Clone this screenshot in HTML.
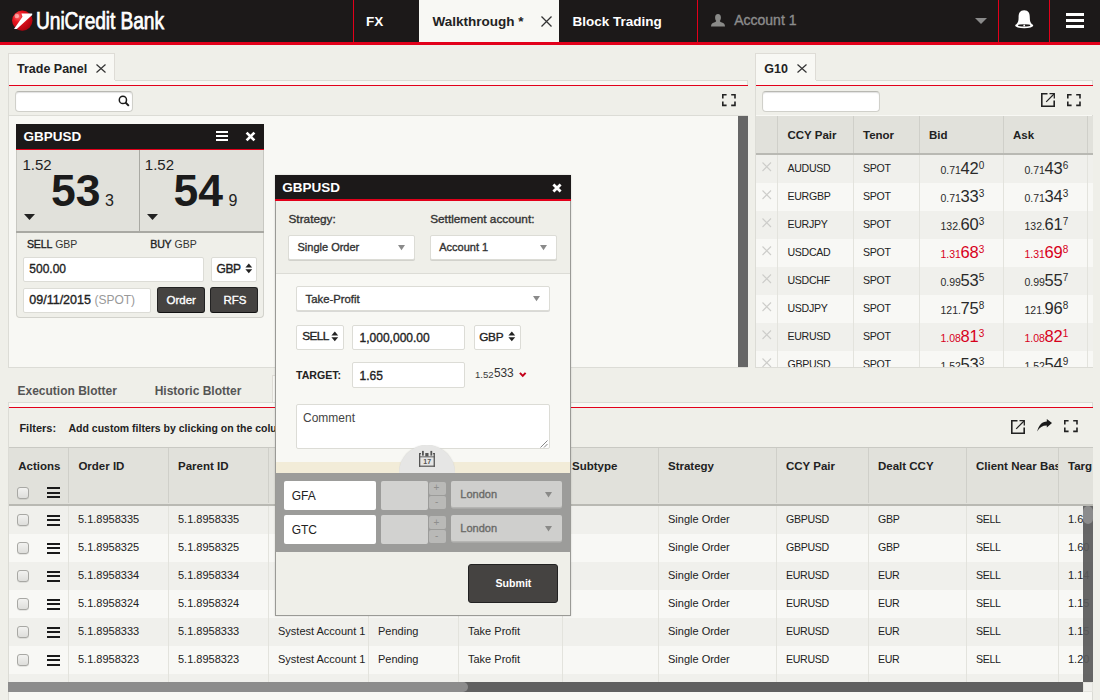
<!DOCTYPE html>
<html><head><meta charset="utf-8">
<style>
*{box-sizing:border-box;margin:0;padding:0}
html,body{width:1100px;height:700px;overflow:hidden}
body{position:relative;background:#efefe9;font-family:"Liberation Sans",sans-serif;color:#222;}
.a{position:absolute}
.t{position:absolute;line-height:1;white-space:nowrap}
svg{display:block;overflow:visible}
.m{-webkit-text-stroke:0.35px currentColor}
.clip{position:absolute;overflow:hidden}
</style></head>
<body>
<div class="a" style="left:0px;top:0px;width:1100px;height:42px;background:#1c1919"></div>
<div class="a" style="left:0px;top:42px;width:1100px;height:3px;background:#e2001a"></div>
<div class="a" style="left:353px;top:0px;width:1px;height:42px;background:#e2001a"></div>
<div class="a" style="left:697px;top:0px;width:1px;height:42px;background:#e2001a"></div>
<div class="a" style="left:998px;top:0px;width:1px;height:42px;background:#e2001a"></div>
<div class="a" style="left:1049px;top:0px;width:1px;height:42px;background:#e2001a"></div>
<div class="a" style="left:419px;top:0px;width:140px;height:42px;background:#f8f8f4"></div>
<svg class="a" style="left:11px;top:10px;" width="23" height="22" viewBox="0 0 23 22"><defs><radialGradient id="lg" cx="0.3" cy="0.3" r="0.8"><stop offset="0" stop-color="#ff6a6a"/><stop offset="0.35" stop-color="#e8141e"/><stop offset="1" stop-color="#a8000c"/></radialGradient></defs>
<circle cx="11.3" cy="10.6" r="10.2" fill="url(#lg)"/>
<circle cx="5.8" cy="6" r="2.2" fill="#fff" opacity="0.45"/><polygon points="3,19 11.5,6.7 10.4,3.5 21.2,3.5 21.2,4.9 5.8,19" fill="#fff"/></svg>
<div class="t" style="left:35.6px;top:9.80px;font-size:23px;font-weight:normal;color:#fff;transform:scaleX(0.835);transform-origin:0 0;letter-spacing:-0.1px;-webkit-text-stroke:0.75px #fff">UniCredit Bank</div>
<div class="t" style="left:366px;top:14.91px;font-size:13.5px;font-weight:bold;color:#fff;">FX</div>
<div class="t" style="left:432.5px;top:14.91px;font-size:13.5px;font-weight:bold;color:#222;">Walkthrough *</div>
<svg class="a" style="left:541px;top:15.5px;" width="11" height="11" viewBox="0 0 11 11"><path d="M0.5 0.5L10.5 10.5M10.5 0.5L0.5 10.5" stroke="#333" stroke-width="1.3"/></svg>
<div class="t" style="left:572.5px;top:14.91px;font-size:13.5px;font-weight:bold;color:#fff;">Block Trading</div>
<svg class="a" style="left:710.5px;top:13.7px;" width="14" height="12.5" viewBox="0 0 14 12.5"><ellipse cx="7" cy="3.7" rx="2.9" ry="3.7" fill="#8a8a88"/><path d="M0 12.4 C0 9.6 1.4 8.7 4.4 7.9 L5.6 6.6 H8.4 L9.6 7.9 C12.6 8.7 14 9.6 14 12.4Z" fill="#8a8a88"/></svg>
<div class="t" style="left:734.2px;top:13.36px;font-size:14px;font-weight:normal;color:#8c8c8c;"><span class=m>Account 1</span></div>
<svg class="a" style="left:975px;top:17.5px;" width="12" height="6" viewBox="0 0 12 6"><polygon points="0,0 12,0 6,6" fill="#8a8a8a"/></svg>
<svg class="a" style="left:1015px;top:10.3px;" width="18.4" height="18.5" viewBox="0 0 18.4 18.5"><path d="M9.2 0.3 C4.9 0.3 3.6 3.4 3.6 7.4 C3.6 11 2.9 12.8 1.1 14.4 L17.3 14.4 C15.5 12.8 14.8 11 14.8 7.4 C14.8 3.4 13.5 0.3 9.2 0.3Z" fill="#fff"/><ellipse cx="9.2" cy="15.6" rx="9.1" ry="2.6" fill="#fff"/><ellipse cx="9.2" cy="15.4" rx="6.2" ry="1.1" fill="#1c1919"/><circle cx="9.2" cy="15.5" r="0.9" fill="#fff"/></svg>
<div class="a" style="left:1066px;top:13px;width:18px;height:3px;background:#fff"></div>
<div class="a" style="left:1066px;top:19px;width:18px;height:3px;background:#fff"></div>
<div class="a" style="left:1066px;top:25px;width:18px;height:3px;background:#fff"></div>
<div class="a" style="left:8px;top:53px;width:107px;height:28px;background:#f8f8f4;border:1px solid #dedcd6;border-bottom:none"></div>
<div class="t" style="left:17px;top:62.53px;font-size:12.5px;font-weight:bold;color:#222;">Trade Panel</div>
<svg class="a" style="left:96px;top:64px;" width="10" height="9" viewBox="0 0 10 9"><path d="M0.5 0.5L9.5 8.5M9.5 0.5L0.5 8.5" stroke="#333" stroke-width="1.2"/></svg>
<div class="a" style="left:8px;top:80px;width:740px;height:288px;background:#f8f8f4;border:1px solid #dcdcd6;border-top:none"></div>
<div class="a" style="left:115px;top:80px;width:633px;height:1px;background:#dcdcd6"></div>
<div class="a" style="left:9px;top:85px;width:739px;height:1px;background:#e2001a"></div>
<div class="a" style="left:9px;top:86px;width:739px;height:29px;background:#efefe9"></div>
<div class="a" style="left:9px;top:115px;width:739px;height:1px;background:#dcdcd6"></div>
<div class="a" style="left:15px;top:91px;width:118px;height:20.5px;background:#fff;border:1px solid #d0d0ca;border-top-color:#b8b8b2;border-radius:4px;box-shadow:inset 0 1px 1px rgba(0,0,0,.12)"></div>
<svg class="a" style="left:118px;top:95px;" width="12" height="12" viewBox="0 0 12 12"><circle cx="4.9" cy="4.9" r="3.6" fill="none" stroke="#1a1a1a" stroke-width="1.5"/><path d="M7.5 7.5L10.8 10.8" stroke="#1a1a1a" stroke-width="1.9"/></svg>
<svg class="a" style="left:722.2px;top:93.5px;" width="13.8" height="12.2" viewBox="0 0 13.8 12.2"><path d="M0.8 4.6V0.8H4.6M9.200000000000001 0.8H13.0V4.6M13.0 7.6V11.399999999999999H9.200000000000001M4.6 11.399999999999999H0.8V7.6" fill="none" stroke="#222" stroke-width="1.6"/></svg>
<div class="a" style="left:738px;top:116px;width:10px;height:251px;background:#666"></div>
<div class="a" style="left:755px;top:53px;width:61px;height:28px;background:#f8f8f4;border:1px solid #dedcd6;border-bottom:none"></div>
<div class="t" style="left:764.3px;top:62.53px;font-size:12.5px;font-weight:bold;color:#222;">G10</div>
<svg class="a" style="left:796.5px;top:64px;" width="10" height="9" viewBox="0 0 10 9"><path d="M0.5 0.5L9.5 8.5M9.5 0.5L0.5 8.5" stroke="#333" stroke-width="1.2"/></svg>
<div class="a" style="left:755px;top:80px;width:338px;height:288px;background:#f8f8f4;border:1px solid #dcdcd6;border-top:none"></div>
<div class="a" style="left:816px;top:80px;width:277px;height:1px;background:#dcdcd6"></div>
<div class="a" style="left:756px;top:85px;width:337px;height:1px;background:#e2001a"></div>
<div class="a" style="left:756px;top:86px;width:337px;height:29px;background:#efefe9"></div>
<div class="a" style="left:762px;top:91px;width:118px;height:20.5px;background:#fff;border:1px solid #d0d0ca;border-top-color:#b8b8b2;border-radius:4px;box-shadow:inset 0 1px 1px rgba(0,0,0,.12)"></div>
<svg class="a" style="left:1041px;top:93px;" width="14" height="14" viewBox="0 0 14 14"><path d="M6.5 0.8H0.8V13.2H13.2V7.5" fill="none" stroke="#222" stroke-width="1.6"/><path d="M8.5 0.7H13.3V5.5" fill="none" stroke="#222" stroke-width="1.3"/><path d="M13 1L5.2 8.8" stroke="#222" stroke-width="1.2"/></svg>
<svg class="a" style="left:1067.3px;top:93.5px;" width="13.8" height="12.2" viewBox="0 0 13.8 12.2"><path d="M0.8 4.6V0.8H4.6M9.200000000000001 0.8H13.0V4.6M13.0 7.6V11.399999999999999H9.200000000000001M4.6 11.399999999999999H0.8V7.6" fill="none" stroke="#222" stroke-width="1.6"/></svg>
<div class="clip" style="left:756px;top:116px;width:337px;height:251px">
</div>
<div class="a" style="left:756px;top:116px;width:337px;height:37px;background:#e1e1db"></div>
<div class="a" style="left:756px;top:153px;width:337px;height:2px;background:#b9b9b3"></div>
<div class="clip" style="left:0;top:0;width:1093px;height:367px">
<div class="a" style="left:756px;top:155px;width:337px;height:28px;background:#f0f0ec"></div>
<div class="a" style="left:756px;top:183px;width:337px;height:28px;background:#f8f8f5"></div>
<div class="a" style="left:756px;top:211px;width:337px;height:28px;background:#f0f0ec"></div>
<div class="a" style="left:756px;top:239px;width:337px;height:28px;background:#f8f8f5"></div>
<div class="a" style="left:756px;top:267px;width:337px;height:28px;background:#f0f0ec"></div>
<div class="a" style="left:756px;top:295px;width:337px;height:28px;background:#f8f8f5"></div>
<div class="a" style="left:756px;top:323px;width:337px;height:28px;background:#f0f0ec"></div>
<div class="a" style="left:756px;top:351px;width:337px;height:28px;background:#f8f8f5"></div>
<div class="a" style="left:777px;top:116px;width:1px;height:37px;background:#cfcfc9"></div>
<div class="a" style="left:777px;top:155px;width:1px;height:212px;background:#e3e3dd"></div>
<div class="a" style="left:853px;top:116px;width:1px;height:37px;background:#cfcfc9"></div>
<div class="a" style="left:853px;top:155px;width:1px;height:212px;background:#e3e3dd"></div>
<div class="a" style="left:919px;top:116px;width:1px;height:37px;background:#cfcfc9"></div>
<div class="a" style="left:919px;top:155px;width:1px;height:212px;background:#e3e3dd"></div>
<div class="a" style="left:1003px;top:116px;width:1px;height:37px;background:#cfcfc9"></div>
<div class="a" style="left:1003px;top:155px;width:1px;height:212px;background:#e3e3dd"></div>
<div class="a" style="left:1087px;top:116px;width:1px;height:37px;background:#cfcfc9"></div>
<div class="a" style="left:1087px;top:155px;width:1px;height:212px;background:#e3e3dd"></div>
<svg class="a" style="left:762px;top:161.6px;" width="9.5" height="9.5" viewBox="0 0 9.5 9.5"><path d="M0.5 0.5L9.0 9.0M9.0 0.5L0.5 9.0" stroke="#cdcdca" stroke-width="1.1"/></svg>
<div class="t" style="left:787.5px;top:162.75px;font-size:10.6px;font-weight:normal;color:#222;letter-spacing:-0.3px">AUDUSD</div>
<div class="t" style="left:863px;top:162.75px;font-size:10.6px;font-weight:normal;color:#222;letter-spacing:-0.3px">SPOT</div>
<div class="t" style="left:940.5px;top:165.11px;font-size:10.5px;font-weight:normal;color:#2a2a2a;">0.71</div>
<div class="t" style="left:960.43px;top:160.03px;font-size:16.5px;font-weight:normal;color:#2a2a2a;">42</div>
<div class="t" style="left:978.78px;top:160.82px;font-size:10px;font-weight:normal;color:#2a2a2a;">0</div>
<div class="t" style="left:1024.5px;top:165.11px;font-size:10.5px;font-weight:normal;color:#2a2a2a;">0.71</div>
<div class="t" style="left:1044.43px;top:160.03px;font-size:16.5px;font-weight:normal;color:#2a2a2a;">43</div>
<div class="t" style="left:1062.78px;top:160.82px;font-size:10px;font-weight:normal;color:#2a2a2a;">6</div>
<svg class="a" style="left:762px;top:189.6px;" width="9.5" height="9.5" viewBox="0 0 9.5 9.5"><path d="M0.5 0.5L9.0 9.0M9.0 0.5L0.5 9.0" stroke="#cdcdca" stroke-width="1.1"/></svg>
<div class="t" style="left:787.5px;top:190.75px;font-size:10.6px;font-weight:normal;color:#222;letter-spacing:-0.3px">EURGBP</div>
<div class="t" style="left:863px;top:190.75px;font-size:10.6px;font-weight:normal;color:#222;letter-spacing:-0.3px">SPOT</div>
<div class="t" style="left:940.5px;top:193.11px;font-size:10.5px;font-weight:normal;color:#2a2a2a;">0.71</div>
<div class="t" style="left:960.43px;top:188.03px;font-size:16.5px;font-weight:normal;color:#2a2a2a;">33</div>
<div class="t" style="left:978.78px;top:188.82px;font-size:10px;font-weight:normal;color:#2a2a2a;">3</div>
<div class="t" style="left:1024.5px;top:193.11px;font-size:10.5px;font-weight:normal;color:#2a2a2a;">0.71</div>
<div class="t" style="left:1044.43px;top:188.03px;font-size:16.5px;font-weight:normal;color:#2a2a2a;">34</div>
<div class="t" style="left:1062.78px;top:188.82px;font-size:10px;font-weight:normal;color:#2a2a2a;">3</div>
<svg class="a" style="left:762px;top:217.6px;" width="9.5" height="9.5" viewBox="0 0 9.5 9.5"><path d="M0.5 0.5L9.0 9.0M9.0 0.5L0.5 9.0" stroke="#cdcdca" stroke-width="1.1"/></svg>
<div class="t" style="left:787.5px;top:218.75px;font-size:10.6px;font-weight:normal;color:#222;letter-spacing:-0.3px">EURJPY</div>
<div class="t" style="left:863px;top:218.75px;font-size:10.6px;font-weight:normal;color:#222;letter-spacing:-0.3px">SPOT</div>
<div class="t" style="left:940.5px;top:221.11px;font-size:10.5px;font-weight:normal;color:#2a2a2a;">132.</div>
<div class="t" style="left:960.43px;top:216.03px;font-size:16.5px;font-weight:normal;color:#2a2a2a;">60</div>
<div class="t" style="left:978.78px;top:216.82px;font-size:10px;font-weight:normal;color:#2a2a2a;">3</div>
<div class="t" style="left:1024.5px;top:221.11px;font-size:10.5px;font-weight:normal;color:#2a2a2a;">132.</div>
<div class="t" style="left:1044.43px;top:216.03px;font-size:16.5px;font-weight:normal;color:#2a2a2a;">61</div>
<div class="t" style="left:1062.78px;top:216.82px;font-size:10px;font-weight:normal;color:#2a2a2a;">7</div>
<svg class="a" style="left:762px;top:245.6px;" width="9.5" height="9.5" viewBox="0 0 9.5 9.5"><path d="M0.5 0.5L9.0 9.0M9.0 0.5L0.5 9.0" stroke="#cdcdca" stroke-width="1.1"/></svg>
<div class="t" style="left:787.5px;top:246.75px;font-size:10.6px;font-weight:normal;color:#222;letter-spacing:-0.3px">USDCAD</div>
<div class="t" style="left:863px;top:246.75px;font-size:10.6px;font-weight:normal;color:#222;letter-spacing:-0.3px">SPOT</div>
<div class="t" style="left:940.5px;top:249.11px;font-size:10.5px;font-weight:normal;color:#d7001b;">1.31</div>
<div class="t" style="left:960.43px;top:244.03px;font-size:16.5px;font-weight:normal;color:#d7001b;">68</div>
<div class="t" style="left:978.78px;top:244.82px;font-size:10px;font-weight:normal;color:#d7001b;">3</div>
<div class="t" style="left:1024.5px;top:249.11px;font-size:10.5px;font-weight:normal;color:#d7001b;">1.31</div>
<div class="t" style="left:1044.43px;top:244.03px;font-size:16.5px;font-weight:normal;color:#d7001b;">69</div>
<div class="t" style="left:1062.78px;top:244.82px;font-size:10px;font-weight:normal;color:#d7001b;">8</div>
<svg class="a" style="left:762px;top:273.6px;" width="9.5" height="9.5" viewBox="0 0 9.5 9.5"><path d="M0.5 0.5L9.0 9.0M9.0 0.5L0.5 9.0" stroke="#cdcdca" stroke-width="1.1"/></svg>
<div class="t" style="left:787.5px;top:274.75px;font-size:10.6px;font-weight:normal;color:#222;letter-spacing:-0.3px">USDCHF</div>
<div class="t" style="left:863px;top:274.75px;font-size:10.6px;font-weight:normal;color:#222;letter-spacing:-0.3px">SPOT</div>
<div class="t" style="left:940.5px;top:277.11px;font-size:10.5px;font-weight:normal;color:#2a2a2a;">0.99</div>
<div class="t" style="left:960.43px;top:272.03px;font-size:16.5px;font-weight:normal;color:#2a2a2a;">53</div>
<div class="t" style="left:978.78px;top:272.82px;font-size:10px;font-weight:normal;color:#2a2a2a;">5</div>
<div class="t" style="left:1024.5px;top:277.11px;font-size:10.5px;font-weight:normal;color:#2a2a2a;">0.99</div>
<div class="t" style="left:1044.43px;top:272.03px;font-size:16.5px;font-weight:normal;color:#2a2a2a;">55</div>
<div class="t" style="left:1062.78px;top:272.82px;font-size:10px;font-weight:normal;color:#2a2a2a;">7</div>
<svg class="a" style="left:762px;top:301.6px;" width="9.5" height="9.5" viewBox="0 0 9.5 9.5"><path d="M0.5 0.5L9.0 9.0M9.0 0.5L0.5 9.0" stroke="#cdcdca" stroke-width="1.1"/></svg>
<div class="t" style="left:787.5px;top:302.75px;font-size:10.6px;font-weight:normal;color:#222;letter-spacing:-0.3px">USDJPY</div>
<div class="t" style="left:863px;top:302.75px;font-size:10.6px;font-weight:normal;color:#222;letter-spacing:-0.3px">SPOT</div>
<div class="t" style="left:940.5px;top:305.11px;font-size:10.5px;font-weight:normal;color:#2a2a2a;">121.</div>
<div class="t" style="left:960.43px;top:300.03px;font-size:16.5px;font-weight:normal;color:#2a2a2a;">75</div>
<div class="t" style="left:978.78px;top:300.82px;font-size:10px;font-weight:normal;color:#2a2a2a;">8</div>
<div class="t" style="left:1024.5px;top:305.11px;font-size:10.5px;font-weight:normal;color:#2a2a2a;">121.</div>
<div class="t" style="left:1044.43px;top:300.03px;font-size:16.5px;font-weight:normal;color:#2a2a2a;">96</div>
<div class="t" style="left:1062.78px;top:300.82px;font-size:10px;font-weight:normal;color:#2a2a2a;">8</div>
<svg class="a" style="left:762px;top:329.6px;" width="9.5" height="9.5" viewBox="0 0 9.5 9.5"><path d="M0.5 0.5L9.0 9.0M9.0 0.5L0.5 9.0" stroke="#cdcdca" stroke-width="1.1"/></svg>
<div class="t" style="left:787.5px;top:330.75px;font-size:10.6px;font-weight:normal;color:#222;letter-spacing:-0.3px">EURUSD</div>
<div class="t" style="left:863px;top:330.75px;font-size:10.6px;font-weight:normal;color:#222;letter-spacing:-0.3px">SPOT</div>
<div class="t" style="left:940.5px;top:333.11px;font-size:10.5px;font-weight:normal;color:#d7001b;">1.08</div>
<div class="t" style="left:960.43px;top:328.03px;font-size:16.5px;font-weight:normal;color:#d7001b;">81</div>
<div class="t" style="left:978.78px;top:328.82px;font-size:10px;font-weight:normal;color:#d7001b;">3</div>
<div class="t" style="left:1024.5px;top:333.11px;font-size:10.5px;font-weight:normal;color:#d7001b;">1.08</div>
<div class="t" style="left:1044.43px;top:328.03px;font-size:16.5px;font-weight:normal;color:#d7001b;">82</div>
<div class="t" style="left:1062.78px;top:328.82px;font-size:10px;font-weight:normal;color:#d7001b;">1</div>
<svg class="a" style="left:762px;top:357.6px;" width="9.5" height="9.5" viewBox="0 0 9.5 9.5"><path d="M0.5 0.5L9.0 9.0M9.0 0.5L0.5 9.0" stroke="#cdcdca" stroke-width="1.1"/></svg>
<div class="t" style="left:787.5px;top:358.75px;font-size:10.6px;font-weight:normal;color:#222;letter-spacing:-0.3px">GBPUSD</div>
<div class="t" style="left:863px;top:358.75px;font-size:10.6px;font-weight:normal;color:#222;letter-spacing:-0.3px">SPOT</div>
<div class="t" style="left:940.5px;top:361.11px;font-size:10.5px;font-weight:normal;color:#2a2a2a;">1.52</div>
<div class="t" style="left:960.43px;top:356.03px;font-size:16.5px;font-weight:normal;color:#2a2a2a;">53</div>
<div class="t" style="left:978.78px;top:356.82px;font-size:10px;font-weight:normal;color:#2a2a2a;">3</div>
<div class="t" style="left:1024.5px;top:361.11px;font-size:10.5px;font-weight:normal;color:#2a2a2a;">1.52</div>
<div class="t" style="left:1044.43px;top:356.03px;font-size:16.5px;font-weight:normal;color:#2a2a2a;">54</div>
<div class="t" style="left:1062.78px;top:356.82px;font-size:10px;font-weight:normal;color:#2a2a2a;">9</div>
</div>
<div class="t" style="left:787.5px;top:130.05px;font-size:11.5px;font-weight:bold;color:#222;">CCY Pair</div>
<div class="t" style="left:863px;top:130.05px;font-size:11.5px;font-weight:bold;color:#222;">Tenor</div>
<div class="t" style="left:929px;top:130.05px;font-size:11.5px;font-weight:bold;color:#222;">Bid</div>
<div class="t" style="left:1013px;top:130.05px;font-size:11.5px;font-weight:bold;color:#222;">Ask</div>
<div class="a" style="left:16px;top:124px;width:248px;height:26px;background:#1c1919"></div>
<div class="a" style="left:16px;top:149px;width:248px;height:1px;background:#e2001a"></div>
<div class="t" style="left:23.4px;top:130.21px;font-size:13.5px;font-weight:bold;color:#fff;">GBPUSD</div>
<div class="a" style="left:215.5px;top:130.8px;width:12.5px;height:2.2px;background:#fff"></div>
<div class="a" style="left:215.5px;top:134.9px;width:12.5px;height:2.2px;background:#fff"></div>
<div class="a" style="left:215.5px;top:139px;width:12.5px;height:2.2px;background:#fff"></div>
<svg class="a" style="left:244.5px;top:130.5px;" width="11" height="11" viewBox="0 0 11 11"><path d="M1.6 1.6L9.4 9.4M9.4 1.6L1.6 9.4" stroke="#fff" stroke-width="2.7"/></svg>
<div class="a" style="left:16px;top:150px;width:248px;height:83px;background:#e1e1db;border-left:1px solid #c8c8c2;border-right:1px solid #c8c8c2"></div>
<div class="a" style="left:139px;top:150px;width:1px;height:81px;background:#a9a9a3"></div>
<div class="a" style="left:16px;top:231px;width:248px;height:2px;background:#a9a9a3"></div>
<div class="t" style="left:22.4px;top:156.54px;font-size:15px;font-weight:normal;color:#222;">1.52</div>
<div class="t" style="left:144.8px;top:156.54px;font-size:15px;font-weight:normal;color:#222;">1.52</div>
<div class="t" style="left:51px;top:168.77px;font-size:44.5px;font-weight:bold;color:#1b1b1b;">53</div>
<div class="t" style="left:105px;top:193.12px;font-size:16px;font-weight:normal;color:#222;">3</div>
<div class="t" style="left:173.5px;top:168.77px;font-size:44.5px;font-weight:bold;color:#1b1b1b;">54</div>
<div class="t" style="left:228.5px;top:193.12px;font-size:16px;font-weight:normal;color:#222;">9</div>
<svg class="a" style="left:24px;top:214px;" width="11" height="6" viewBox="0 0 11 6"><polygon points="0,0 11,0 5.5,6" fill="#222"/></svg>
<svg class="a" style="left:146.5px;top:213.5px;" width="11" height="6" viewBox="0 0 11 6"><polygon points="0,0 11,0 5.5,6" fill="#222"/></svg>
<div class="a" style="left:16px;top:233px;width:248px;height:85px;background:#efefe9;border:1px solid #d2d2cc;border-top:none;border-radius:0 0 4px 4px"></div>
<div class="t" style="left:27px;top:238.71px;font-size:11px;font-weight:normal;color:#222;"><span class=m style="letter-spacing:-0.2px;font-size:10.6px">SELL</span> <span style="font-size:10.5px;color:#333">GBP</span></div>
<div class="t" style="left:150.3px;top:238.71px;font-size:11px;font-weight:normal;color:#222;"><span class=m style="letter-spacing:-0.2px;font-size:10.6px">BUY</span> <span style="font-size:10.5px;color:#333">GBP</span></div>
<div class="a" style="left:22.5px;top:256.5px;width:181.5px;height:25px;background:#fff;border:1px solid #dcdcd6;border-radius:2px;"></div>
<div class="t" style="left:29.3px;top:262.59px;font-size:12px;font-weight:normal;color:#222;"><span class=m>500.00</span></div>
<div class="a" style="left:210.5px;top:256.5px;width:46.5px;height:25px;background:#fff;border:1px solid #dcdcd6;border-radius:2px;"></div>
<div class="t" style="left:216.5px;top:262.59px;font-size:12px;font-weight:normal;color:#222;"><span class=m style="letter-spacing:-0.4px">GBP</span></div>
<svg class="a" style="left:244.8px;top:263.2px;" width="8" height="11" viewBox="0 0 8 11"><polygon points="0.4,4.5 3.8,0.4 7.2,4.5" fill="#222"/><polygon points="0.4,6.2 7.2,6.2 3.8,10.2" fill="#222"/></svg>
<div class="a" style="left:22.5px;top:287.5px;width:128.5px;height:25px;background:#fff;border:1px solid #dcdcd6;border-radius:2px;"></div>
<div class="t" style="left:29.3px;top:294.03px;font-size:12.5px;font-weight:normal;color:#222;"><span class=m>09/11/2015</span> <span style="color:#999;font-size:12px">(SPOT)</span></div>
<div class="a" style="left:157px;top:287px;width:48px;height:26px;background:#454341;border:1px solid #222;border-bottom-color:#111;border-radius:3px"></div>
<div class="a" style="left:210px;top:287px;width:48px;height:26px;background:#454341;border:1px solid #222;border-bottom-color:#111;border-radius:3px"></div>
<div class="t" style="left:166.5px;top:294.85px;font-size:11.5px;font-weight:normal;color:#fff;"><span class=m>Order</span></div>
<div class="t" style="left:223.5px;top:294.85px;font-size:11.5px;font-weight:normal;color:#fff;"><span class=m>RFS</span></div>
<div class="t" style="left:17.5px;top:384.59px;font-size:12px;font-weight:bold;color:#555;">Execution Blotter</div>
<div class="t" style="left:154.7px;top:384.59px;font-size:12px;font-weight:bold;color:#555;">Historic Blotter</div>
<div class="a" style="left:272px;top:375px;width:100px;height:28px;background:#f8f8f4;border:1px solid #dedcd6;border-bottom:none"></div>
<div class="a" style="left:8px;top:402px;width:1085px;height:300px;background:#f8f8f4;border:1px solid #dcdcd6"></div>
<div class="a" style="left:9px;top:407px;width:1084px;height:1px;background:#e2001a"></div>
<div class="a" style="left:9px;top:408px;width:1084px;height:39px;background:#efefe9"></div>
<div class="a" style="left:9px;top:447px;width:1084px;height:1px;background:#c9c9c3"></div>
<div class="t" style="left:19.4px;top:422.71px;font-size:11px;font-weight:bold;color:#222;">Filters:</div>
<div class="t" style="left:68.5px;top:422.77px;font-size:10.5px;font-weight:bold;color:#222;">Add custom filters by clicking on the column headers</div>
<svg class="a" style="left:1011px;top:419.5px;" width="14" height="14" viewBox="0 0 14 14"><path d="M6.5 0.8H0.8V13.2H13.2V7.5" fill="none" stroke="#222" stroke-width="1.6"/><path d="M8.5 0.7H13.3V5.5" fill="none" stroke="#222" stroke-width="1.3"/><path d="M13 1L5.2 8.8" stroke="#222" stroke-width="1.2"/></svg>
<svg class="a" style="left:1037px;top:419.4px;" width="15" height="13" viewBox="0 0 15 13"><path d="M0.2 12.6 C1.5 6.5 5 2.5 9.8 2.5 V0 L15 4.1 L9.8 8.6 V6.6 C5.5 6.6 2.5 8.5 0.2 12.6Z" fill="#1a1a1a"/></svg>
<svg class="a" style="left:1064.2px;top:419.8px;" width="13.8" height="12.2" viewBox="0 0 13.8 12.2"><path d="M0.8 4.6V0.8H4.6M9.200000000000001 0.8H13.0V4.6M13.0 7.6V11.399999999999999H9.200000000000001M4.6 11.399999999999999H0.8V7.6" fill="none" stroke="#222" stroke-width="1.6"/></svg>
<div class="a" style="left:9px;top:448px;width:1084px;height:56px;background:#e1e1db"></div>
<div class="a" style="left:9px;top:504px;width:1084px;height:2px;background:#b9b9b3"></div>
<div class="clip" style="left:0;top:0;width:1093px;height:682px">
<div class="a" style="left:9px;top:506px;width:1084px;height:28px;background:#f0f0ec"></div>
<div class="a" style="left:9px;top:534px;width:1084px;height:28px;background:#f8f8f5"></div>
<div class="a" style="left:9px;top:562px;width:1084px;height:28px;background:#f0f0ec"></div>
<div class="a" style="left:9px;top:590px;width:1084px;height:28px;background:#f8f8f5"></div>
<div class="a" style="left:9px;top:618px;width:1084px;height:28px;background:#f0f0ec"></div>
<div class="a" style="left:9px;top:646px;width:1084px;height:28px;background:#f8f8f5"></div>
<div class="a" style="left:9px;top:674px;width:1084px;height:28px;background:#f0f0ec"></div>
<div class="a" style="left:68px;top:448px;width:1px;height:55px;background:#cfcfc9"></div>
<div class="a" style="left:68px;top:506px;width:1px;height:180px;background:#e3e3dd"></div>
<div class="a" style="left:168px;top:448px;width:1px;height:55px;background:#cfcfc9"></div>
<div class="a" style="left:168px;top:506px;width:1px;height:180px;background:#e3e3dd"></div>
<div class="a" style="left:268px;top:448px;width:1px;height:55px;background:#cfcfc9"></div>
<div class="a" style="left:268px;top:506px;width:1px;height:180px;background:#e3e3dd"></div>
<div class="a" style="left:368px;top:448px;width:1px;height:55px;background:#cfcfc9"></div>
<div class="a" style="left:368px;top:506px;width:1px;height:180px;background:#e3e3dd"></div>
<div class="a" style="left:458px;top:448px;width:1px;height:55px;background:#cfcfc9"></div>
<div class="a" style="left:458px;top:506px;width:1px;height:180px;background:#e3e3dd"></div>
<div class="a" style="left:562px;top:448px;width:1px;height:55px;background:#cfcfc9"></div>
<div class="a" style="left:562px;top:506px;width:1px;height:180px;background:#e3e3dd"></div>
<div class="a" style="left:658px;top:448px;width:1px;height:55px;background:#cfcfc9"></div>
<div class="a" style="left:658px;top:506px;width:1px;height:180px;background:#e3e3dd"></div>
<div class="a" style="left:776px;top:448px;width:1px;height:55px;background:#cfcfc9"></div>
<div class="a" style="left:776px;top:506px;width:1px;height:180px;background:#e3e3dd"></div>
<div class="a" style="left:868px;top:448px;width:1px;height:55px;background:#cfcfc9"></div>
<div class="a" style="left:868px;top:506px;width:1px;height:180px;background:#e3e3dd"></div>
<div class="a" style="left:966px;top:448px;width:1px;height:55px;background:#cfcfc9"></div>
<div class="a" style="left:966px;top:506px;width:1px;height:180px;background:#e3e3dd"></div>
<div class="a" style="left:1058px;top:448px;width:1px;height:55px;background:#cfcfc9"></div>
<div class="a" style="left:1058px;top:506px;width:1px;height:180px;background:#e3e3dd"></div>
<div class="a" style="left:17px;top:514px;width:12px;height:12px;background:linear-gradient(#f2f2f0,#dededb);border:1px solid #a8a8a4;border-radius:3px;box-shadow:0 0.5px 0.5px rgba(0,0,0,.15)"></div>
<div class="a" style="left:47px;top:514.5px;width:13px;height:2.2px;background:#1a1a1a"></div>
<div class="a" style="left:47px;top:519px;width:13px;height:2.2px;background:#1a1a1a"></div>
<div class="a" style="left:47px;top:523.5px;width:13px;height:2.2px;background:#1a1a1a"></div>
<div class="t" style="left:78px;top:513.71px;font-size:11px;font-weight:normal;color:#222;">5.1.8958335</div>
<div class="t" style="left:178px;top:513.71px;font-size:11px;font-weight:normal;color:#222;">5.1.8958335</div>
<div class="t" style="left:668px;top:513.71px;font-size:11px;font-weight:normal;color:#222;">Single Order</div>
<div class="t" style="left:786px;top:513.75px;font-size:10.6px;font-weight:normal;color:#222;letter-spacing:-0.3px">GBPUSD</div>
<div class="t" style="left:878px;top:513.75px;font-size:10.6px;font-weight:normal;color:#222;letter-spacing:-0.3px">GBP</div>
<div class="t" style="left:976px;top:513.75px;font-size:10.6px;font-weight:normal;color:#222;letter-spacing:-0.3px">SELL</div>
<div class="t" style="left:1068px;top:513.71px;font-size:11px;font-weight:normal;color:#222;">1.65</div>
<div class="a" style="left:17px;top:542px;width:12px;height:12px;background:linear-gradient(#f2f2f0,#dededb);border:1px solid #a8a8a4;border-radius:3px;box-shadow:0 0.5px 0.5px rgba(0,0,0,.15)"></div>
<div class="a" style="left:47px;top:542.5px;width:13px;height:2.2px;background:#1a1a1a"></div>
<div class="a" style="left:47px;top:547px;width:13px;height:2.2px;background:#1a1a1a"></div>
<div class="a" style="left:47px;top:551.5px;width:13px;height:2.2px;background:#1a1a1a"></div>
<div class="t" style="left:78px;top:541.71px;font-size:11px;font-weight:normal;color:#222;">5.1.8958325</div>
<div class="t" style="left:178px;top:541.71px;font-size:11px;font-weight:normal;color:#222;">5.1.8958325</div>
<div class="t" style="left:668px;top:541.71px;font-size:11px;font-weight:normal;color:#222;">Single Order</div>
<div class="t" style="left:786px;top:541.75px;font-size:10.6px;font-weight:normal;color:#222;letter-spacing:-0.3px">GBPUSD</div>
<div class="t" style="left:878px;top:541.75px;font-size:10.6px;font-weight:normal;color:#222;letter-spacing:-0.3px">GBP</div>
<div class="t" style="left:976px;top:541.75px;font-size:10.6px;font-weight:normal;color:#222;letter-spacing:-0.3px">SELL</div>
<div class="t" style="left:1068px;top:541.71px;font-size:11px;font-weight:normal;color:#222;">1.60</div>
<div class="a" style="left:17px;top:570px;width:12px;height:12px;background:linear-gradient(#f2f2f0,#dededb);border:1px solid #a8a8a4;border-radius:3px;box-shadow:0 0.5px 0.5px rgba(0,0,0,.15)"></div>
<div class="a" style="left:47px;top:570.5px;width:13px;height:2.2px;background:#1a1a1a"></div>
<div class="a" style="left:47px;top:575px;width:13px;height:2.2px;background:#1a1a1a"></div>
<div class="a" style="left:47px;top:579.5px;width:13px;height:2.2px;background:#1a1a1a"></div>
<div class="t" style="left:78px;top:569.71px;font-size:11px;font-weight:normal;color:#222;">5.1.8958334</div>
<div class="t" style="left:178px;top:569.71px;font-size:11px;font-weight:normal;color:#222;">5.1.8958334</div>
<div class="t" style="left:668px;top:569.71px;font-size:11px;font-weight:normal;color:#222;">Single Order</div>
<div class="t" style="left:786px;top:569.75px;font-size:10.6px;font-weight:normal;color:#222;letter-spacing:-0.3px">EURUSD</div>
<div class="t" style="left:878px;top:569.75px;font-size:10.6px;font-weight:normal;color:#222;letter-spacing:-0.3px">EUR</div>
<div class="t" style="left:976px;top:569.75px;font-size:10.6px;font-weight:normal;color:#222;letter-spacing:-0.3px">SELL</div>
<div class="t" style="left:1068px;top:569.71px;font-size:11px;font-weight:normal;color:#222;">1.14</div>
<div class="a" style="left:17px;top:598px;width:12px;height:12px;background:linear-gradient(#f2f2f0,#dededb);border:1px solid #a8a8a4;border-radius:3px;box-shadow:0 0.5px 0.5px rgba(0,0,0,.15)"></div>
<div class="a" style="left:47px;top:598.5px;width:13px;height:2.2px;background:#1a1a1a"></div>
<div class="a" style="left:47px;top:603px;width:13px;height:2.2px;background:#1a1a1a"></div>
<div class="a" style="left:47px;top:607.5px;width:13px;height:2.2px;background:#1a1a1a"></div>
<div class="t" style="left:78px;top:597.71px;font-size:11px;font-weight:normal;color:#222;">5.1.8958324</div>
<div class="t" style="left:178px;top:597.71px;font-size:11px;font-weight:normal;color:#222;">5.1.8958324</div>
<div class="t" style="left:668px;top:597.71px;font-size:11px;font-weight:normal;color:#222;">Single Order</div>
<div class="t" style="left:786px;top:597.75px;font-size:10.6px;font-weight:normal;color:#222;letter-spacing:-0.3px">EURUSD</div>
<div class="t" style="left:878px;top:597.75px;font-size:10.6px;font-weight:normal;color:#222;letter-spacing:-0.3px">EUR</div>
<div class="t" style="left:976px;top:597.75px;font-size:10.6px;font-weight:normal;color:#222;letter-spacing:-0.3px">SELL</div>
<div class="t" style="left:1068px;top:597.71px;font-size:11px;font-weight:normal;color:#222;">1.15</div>
<div class="a" style="left:17px;top:626px;width:12px;height:12px;background:linear-gradient(#f2f2f0,#dededb);border:1px solid #a8a8a4;border-radius:3px;box-shadow:0 0.5px 0.5px rgba(0,0,0,.15)"></div>
<div class="a" style="left:47px;top:626.5px;width:13px;height:2.2px;background:#1a1a1a"></div>
<div class="a" style="left:47px;top:631px;width:13px;height:2.2px;background:#1a1a1a"></div>
<div class="a" style="left:47px;top:635.5px;width:13px;height:2.2px;background:#1a1a1a"></div>
<div class="t" style="left:78px;top:625.71px;font-size:11px;font-weight:normal;color:#222;">5.1.8958333</div>
<div class="t" style="left:178px;top:625.71px;font-size:11px;font-weight:normal;color:#222;">5.1.8958333</div>
<div class="t" style="left:278px;top:625.71px;font-size:11px;font-weight:normal;color:#222;">Systest Account 1</div>
<div class="t" style="left:378px;top:625.71px;font-size:11px;font-weight:normal;color:#222;">Pending</div>
<div class="t" style="left:468px;top:625.71px;font-size:11px;font-weight:normal;color:#222;">Take Profit</div>
<div class="t" style="left:668px;top:625.71px;font-size:11px;font-weight:normal;color:#222;">Single Order</div>
<div class="t" style="left:786px;top:625.75px;font-size:10.6px;font-weight:normal;color:#222;letter-spacing:-0.3px">EURUSD</div>
<div class="t" style="left:878px;top:625.75px;font-size:10.6px;font-weight:normal;color:#222;letter-spacing:-0.3px">EUR</div>
<div class="t" style="left:976px;top:625.75px;font-size:10.6px;font-weight:normal;color:#222;letter-spacing:-0.3px">SELL</div>
<div class="t" style="left:1068px;top:625.71px;font-size:11px;font-weight:normal;color:#222;">1.15</div>
<div class="a" style="left:17px;top:654px;width:12px;height:12px;background:linear-gradient(#f2f2f0,#dededb);border:1px solid #a8a8a4;border-radius:3px;box-shadow:0 0.5px 0.5px rgba(0,0,0,.15)"></div>
<div class="a" style="left:47px;top:654.5px;width:13px;height:2.2px;background:#1a1a1a"></div>
<div class="a" style="left:47px;top:659px;width:13px;height:2.2px;background:#1a1a1a"></div>
<div class="a" style="left:47px;top:663.5px;width:13px;height:2.2px;background:#1a1a1a"></div>
<div class="t" style="left:78px;top:653.71px;font-size:11px;font-weight:normal;color:#222;">5.1.8958323</div>
<div class="t" style="left:178px;top:653.71px;font-size:11px;font-weight:normal;color:#222;">5.1.8958323</div>
<div class="t" style="left:278px;top:653.71px;font-size:11px;font-weight:normal;color:#222;">Systest Account 1</div>
<div class="t" style="left:378px;top:653.71px;font-size:11px;font-weight:normal;color:#222;">Pending</div>
<div class="t" style="left:468px;top:653.71px;font-size:11px;font-weight:normal;color:#222;">Take Profit</div>
<div class="t" style="left:668px;top:653.71px;font-size:11px;font-weight:normal;color:#222;">Single Order</div>
<div class="t" style="left:786px;top:653.75px;font-size:10.6px;font-weight:normal;color:#222;letter-spacing:-0.3px">EURUSD</div>
<div class="t" style="left:878px;top:653.75px;font-size:10.6px;font-weight:normal;color:#222;letter-spacing:-0.3px">EUR</div>
<div class="t" style="left:976px;top:653.75px;font-size:10.6px;font-weight:normal;color:#222;letter-spacing:-0.3px">SELL</div>
<div class="t" style="left:1068px;top:653.71px;font-size:11px;font-weight:normal;color:#222;">1.20</div>
</div>
<div class="a" style="left:17px;top:486.5px;width:12px;height:12px;background:linear-gradient(#f2f2f0,#dededb);border:1px solid #a8a8a4;border-radius:3px;box-shadow:0 0.5px 0.5px rgba(0,0,0,.15)"></div>
<div class="a" style="left:47px;top:487px;width:13px;height:2.2px;background:#1a1a1a"></div>
<div class="a" style="left:47px;top:491.5px;width:13px;height:2.2px;background:#1a1a1a"></div>
<div class="a" style="left:47px;top:496px;width:13px;height:2.2px;background:#1a1a1a"></div>
<div class="clip" style="left:0;top:0;width:1058px;height:700px">
<div class="t" style="left:18.3px;top:461.15px;font-size:11.5px;font-weight:bold;color:#222;">Actions</div>
<div class="t" style="left:78.4px;top:461.15px;font-size:11.5px;font-weight:bold;color:#222;">Order ID</div>
<div class="t" style="left:178px;top:461.15px;font-size:11.5px;font-weight:bold;color:#222;">Parent ID</div>
<div class="t" style="left:278px;top:461.15px;font-size:11.5px;font-weight:bold;color:#222;">Account</div>
<div class="t" style="left:378px;top:461.15px;font-size:11.5px;font-weight:bold;color:#222;">Status</div>
<div class="t" style="left:468px;top:461.15px;font-size:11.5px;font-weight:bold;color:#222;">Type</div>
<div class="t" style="left:572px;top:461.15px;font-size:11.5px;font-weight:bold;color:#222;">Subtype</div>
<div class="t" style="left:668px;top:461.15px;font-size:11.5px;font-weight:bold;color:#222;">Strategy</div>
<div class="t" style="left:786px;top:461.15px;font-size:11.5px;font-weight:bold;color:#222;">CCY Pair</div>
<div class="t" style="left:878px;top:461.15px;font-size:11.5px;font-weight:bold;color:#222;">Dealt CCY</div>
<div class="t" style="left:976px;top:461.15px;font-size:11.5px;font-weight:bold;color:#222;">Client Near Bas</div>
</div>
<div class="clip" style="left:0;top:0;width:1093px;height:700px">
<div class="t" style="left:1068px;top:461.15px;font-size:11.5px;font-weight:bold;color:#222;">Targ</div>
</div>
<div class="a" style="left:8px;top:682px;width:1075px;height:10px;background:#606060"></div>
<div class="a" style="left:8px;top:682px;width:460px;height:10px;background:#8c8c8c;border-radius:0 5px 5px 0"></div>
<div class="a" style="left:1083px;top:506px;width:10px;height:176px;background:rgba(90,90,90,0.93)"></div>
<div class="a" style="left:1083px;top:506px;width:10px;height:18px;background:#8c8c8c;border-radius:5px"></div>
<div class="a" style="left:1083px;top:682px;width:10px;height:10px;background:#f0f0ec;border:1px solid #e4e4de"></div>
<div class="a" style="left:275px;top:175px;width:296px;height:441px;background:#efefe9;border:1px solid #9a9a96;border-top:none;box-shadow:0 0 2px rgba(0,0,0,.15)"></div>
<div class="a" style="left:275px;top:175px;width:296px;height:25px;background:#1c1919"></div>
<div class="a" style="left:275px;top:199px;width:296px;height:2px;background:#e2001a"></div>
<div class="t" style="left:282.2px;top:181.11px;font-size:13.5px;font-weight:bold;color:#fff;">GBPUSD</div>
<svg class="a" style="left:551.5px;top:182.6px;" width="10" height="10" viewBox="0 0 10 10"><path d="M1.4 1.4L8.6 8.6M8.6 1.4L1.4 8.6" stroke="#fff" stroke-width="2.8"/></svg>
<div class="t" style="left:288.5px;top:214.11px;font-size:11.8px;font-weight:normal;color:#333;"><span class=m>Strategy:</span></div>
<div class="t" style="left:430.2px;top:214.11px;font-size:11.8px;font-weight:normal;color:#333;"><span class=m>Settlement account:</span></div>
<div class="a" style="left:288px;top:235px;width:126.5px;height:25px;background:#fff;border:1px solid #dcdcd6;border-radius:2px;box-shadow:0 1px 0 rgba(0,0,0,.12)"></div>
<div class="t" style="left:297.5px;top:242.21px;font-size:11px;font-weight:normal;color:#333;"><span class=m>Single Order</span></div>
<svg class="a" style="left:398.3px;top:244.9px;" width="7" height="5.2" viewBox="0 0 7 5.2"><polygon points="0,0 7,0 3.5,5.2" fill="#8a8a8a"/></svg>
<div class="a" style="left:430px;top:235px;width:126.5px;height:25px;background:#fff;border:1px solid #dcdcd6;border-radius:2px;box-shadow:0 1px 0 rgba(0,0,0,.12)"></div>
<div class="t" style="left:439.2px;top:242.21px;font-size:11px;font-weight:normal;color:#333;"><span class=m>Account 1</span></div>
<svg class="a" style="left:540.3px;top:244.9px;" width="7" height="5.2" viewBox="0 0 7 5.2"><polygon points="0,0 7,0 3.5,5.2" fill="#8a8a8a"/></svg>
<div class="a" style="left:276px;top:273px;width:294px;height:1px;background:#dcdcd6"></div>
<div class="a" style="left:276px;top:274px;width:294px;height:188px;background:#f8f8f4"></div>
<div class="a" style="left:296px;top:286px;width:253.5px;height:25px;background:#fff;border:1px solid #dcdcd6;border-radius:2px;box-shadow:0 1px 0 rgba(0,0,0,.12)"></div>
<div class="t" style="left:305.6px;top:293.97px;font-size:11.3px;font-weight:normal;color:#333;"><span class=m>Take-Profit</span></div>
<svg class="a" style="left:533.3px;top:295.9px;" width="7" height="5.2" viewBox="0 0 7 5.2"><polygon points="0,0 7,0 3.5,5.2" fill="#8a8a8a"/></svg>
<div class="a" style="left:296px;top:324.5px;width:47.5px;height:25px;background:#fff;border:1px solid #dcdcd6;border-radius:2px"></div>
<div class="t" style="left:302.3px;top:331.41px;font-size:11.8px;font-weight:normal;color:#222;"><span class=m style="letter-spacing:-0.6px">SELL</span></div>
<svg class="a" style="left:330.5px;top:331px;" width="8" height="11" viewBox="0 0 8 11"><polygon points="0.4,4.5 3.8,0.4 7.2,4.5" fill="#222"/><polygon points="0.4,6.2 7.2,6.2 3.8,10.2" fill="#222"/></svg>
<div class="a" style="left:352.4px;top:324.5px;width:112.5px;height:25px;background:#fff;border:1px solid #dcdcd6;border-radius:2px"></div>
<div class="t" style="left:359.6px;top:331.79px;font-size:12px;font-weight:normal;color:#222;"><span class=m>1,000,000.00</span></div>
<div class="a" style="left:473.6px;top:324.5px;width:47px;height:25px;background:#fff;border:1px solid #dcdcd6;border-radius:2px"></div>
<div class="t" style="left:479.2px;top:331.61px;font-size:11.8px;font-weight:normal;color:#222;"><span class=m style="letter-spacing:-0.3px">GBP</span></div>
<svg class="a" style="left:508px;top:331px;" width="8" height="11" viewBox="0 0 8 11"><polygon points="0.4,4.5 3.8,0.4 7.2,4.5" fill="#222"/><polygon points="0.4,6.2 7.2,6.2 3.8,10.2" fill="#222"/></svg>
<div class="t" style="left:296px;top:369.75px;font-size:10.6px;font-weight:bold;color:#222;">TARGET:</div>
<div class="a" style="left:352.4px;top:362.3px;width:112.5px;height:25.5px;background:#fff;border:1px solid #dcdcd6;border-radius:2px"></div>
<div class="t" style="left:359.6px;top:369.79px;font-size:12px;font-weight:normal;color:#222;"><span class=m>1.65</span></div>
<div class="t" style="left:475px;top:369.67px;font-size:9.6px;font-weight:normal;color:#3a3a3a;">1.52</div>
<div class="t" style="left:493.9px;top:367.70px;font-size:11.9px;font-weight:normal;color:#333;">533</div>
<svg class="a" style="left:518.7px;top:371.8px;" width="7.5" height="5" viewBox="0 0 7.5 5"><path d="M0.9 0.9L3.75 3.9L6.6 0.9" fill="none" stroke="#c4001a" stroke-width="2"/></svg>
<div class="a" style="left:296.4px;top:404.4px;width:253.4px;height:45px;background:#fff;border:1px solid #dcdcd6;border-radius:2px"></div>
<div class="t" style="left:303px;top:411.99px;font-size:12px;font-weight:normal;color:#444;">Comment</div>
<svg class="a" style="left:540px;top:440px;" width="8" height="8" viewBox="0 0 8 8"><path d="M0.5 7.5L7.5 0.5M4 7.5L7.5 4" stroke="#888" stroke-width="1"/></svg>
<div class="a" style="left:276px;top:462px;width:294px;height:11px;background:#f2ecd8"></div>
<div class="clip" style="left:399px;top:445px;width:56px;height:28px"><div class="a" style="left:0;top:0;width:56px;height:56px;border-radius:50%;background:#e6e6e5;box-shadow:0 0 1.5px #cfcfca"></div></div>
<svg class="a" style="left:418px;top:450px;" width="18" height="18" viewBox="0 0 18 18"><g fill="#555"><rect x="1" y="3" width="1.3" height="13.8"/><rect x="15.6" y="3" width="1.3" height="13.8"/><rect x="1" y="15.6" width="15.9" height="1.2"/><rect x="1" y="6.4" width="15.9" height="0.9"/><rect x="1" y="3" width="2" height="1.2"/><rect x="14.9" y="3" width="2" height="1.2"/><rect x="4" y="0.9" width="1.8" height="4.7"/><rect x="12.4" y="0.9" width="1.8" height="4.7"/><rect x="7.3" y="3" width="3.2" height="3.4"/></g><text x="9.2" y="13.9" font-size="7" font-family="Liberation Sans" font-weight="bold" text-anchor="middle" fill="#555">17</text></svg>
<div class="a" style="left:276px;top:473px;width:294px;height:79px;background:#9c9c9a"></div>
<div class="a" style="left:284.2px;top:481px;width:91.5px;height:29px;background:#fff;border-radius:2px"></div>
<div class="t" style="left:291.7px;top:489.59px;font-size:12px;font-weight:normal;color:#222;">GFA</div>
<div class="a" style="left:381.3px;top:481px;width:46.4px;height:29px;background:#d2d2d0;border-radius:2px"></div>
<div class="a" style="left:428.9px;top:482px;width:16.7px;height:13px;background:#b9b9b7;border-radius:2px"></div>
<div class="a" style="left:428.9px;top:495.5px;width:16.7px;height:13px;background:#b9b9b7;border-radius:2px"></div>
<div class="t" style="left:433.6px;top:483.43px;font-size:10px;font-weight:normal;color:#8e8e8c;">+</div>
<div class="t" style="left:435px;top:496.82px;font-size:10px;font-weight:normal;color:#8e8e8c;">-</div>
<div class="a" style="left:451.3px;top:481px;width:110.7px;height:25.5px;background:#cfcfcd;border-radius:2px;box-shadow:0 1.5px 0 #b5b5b3"></div>
<div class="t" style="left:460.3px;top:488.71px;font-size:11px;font-weight:normal;color:#6a6a68;"><span class=m>London</span></div>
<svg class="a" style="left:545px;top:491.5px;" width="7" height="5.5" viewBox="0 0 7 5.5"><polygon points="0,0 7,0 3.5,5.5" fill="#8a8a88"/></svg>
<div class="a" style="left:284.2px;top:515.3px;width:91.5px;height:29px;background:#fff;border-radius:2px"></div>
<div class="t" style="left:291.7px;top:523.89px;font-size:12px;font-weight:normal;color:#222;">GTC</div>
<div class="a" style="left:381.3px;top:515.3px;width:46.4px;height:29px;background:#d2d2d0;border-radius:2px"></div>
<div class="a" style="left:428.9px;top:516.3px;width:16.7px;height:13px;background:#b9b9b7;border-radius:2px"></div>
<div class="a" style="left:428.9px;top:529.8px;width:16.7px;height:13px;background:#b9b9b7;border-radius:2px"></div>
<div class="t" style="left:433.6px;top:517.73px;font-size:10px;font-weight:normal;color:#8e8e8c;">+</div>
<div class="t" style="left:435px;top:531.12px;font-size:10px;font-weight:normal;color:#8e8e8c;">-</div>
<div class="a" style="left:451.3px;top:515.3px;width:110.7px;height:25.5px;background:#cfcfcd;border-radius:2px;box-shadow:0 1.5px 0 #b5b5b3"></div>
<div class="t" style="left:460.3px;top:523.01px;font-size:11px;font-weight:normal;color:#6a6a68;"><span class=m>London</span></div>
<svg class="a" style="left:545px;top:525.8px;" width="7" height="5.5" viewBox="0 0 7 5.5"><polygon points="0,0 7,0 3.5,5.5" fill="#8a8a88"/></svg>
<div class="a" style="left:468px;top:564px;width:90px;height:39px;background:#454341;border:1px solid #222;border-radius:3px"></div>
<div class="t" style="left:495.5px;top:577.75px;font-size:10.6px;font-weight:bold;color:#fff;">Submit</div>
</body></html>
